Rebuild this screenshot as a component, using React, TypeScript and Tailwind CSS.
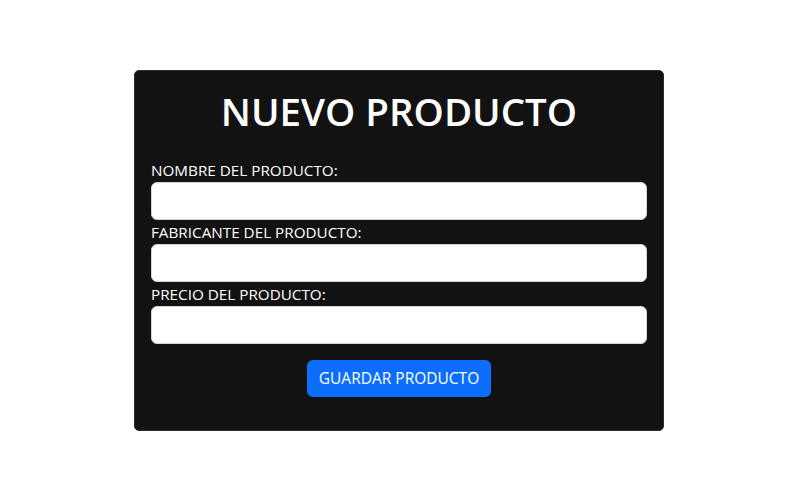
export default function App() {
  return (
    <div className="flex h-[500px] w-full items-start justify-center bg-white pr-[2px] pt-[70px] font-['Open_Sans',sans-serif]">
      <form
        className="flex w-[530px] flex-col rounded-[5px] border border-[#2e2e2e] bg-[#121212] px-4 pb-[33px] pt-4 text-white"
        onSubmit={(e) => e.preventDefault()}
      >
        <h1 className="mb-[23px] text-center text-[38.5px] font-semibold leading-[48px]">NUEVO PRODUCTO</h1>
        <Field label="NOMBRE DEL PRODUCTO:" />
        <Field label="FABRICANTE DEL PRODUCTO:" />
        <Field label="PRECIO DEL PRODUCTO:" />
        <div className="mt-4 flex justify-center">
          <button
            type="submit"
            className="h-[37px] rounded-[6px] bg-[#0d6efd] px-3 text-[15.5px] text-white"
          >
            GUARDAR PRODUCTO
          </button>
        </div>
      </form>
    </div>
  );
}

function Field({ label }: { label: string }) {
  return (
    <label className="flex flex-col">
      <span className="text-[15.25px] leading-[24px]">{label}</span>
      <input className="h-[38px] w-full rounded-[6px] border border-[#ced4da] bg-white px-3 text-black outline-none" />
    </label>
  );
}
